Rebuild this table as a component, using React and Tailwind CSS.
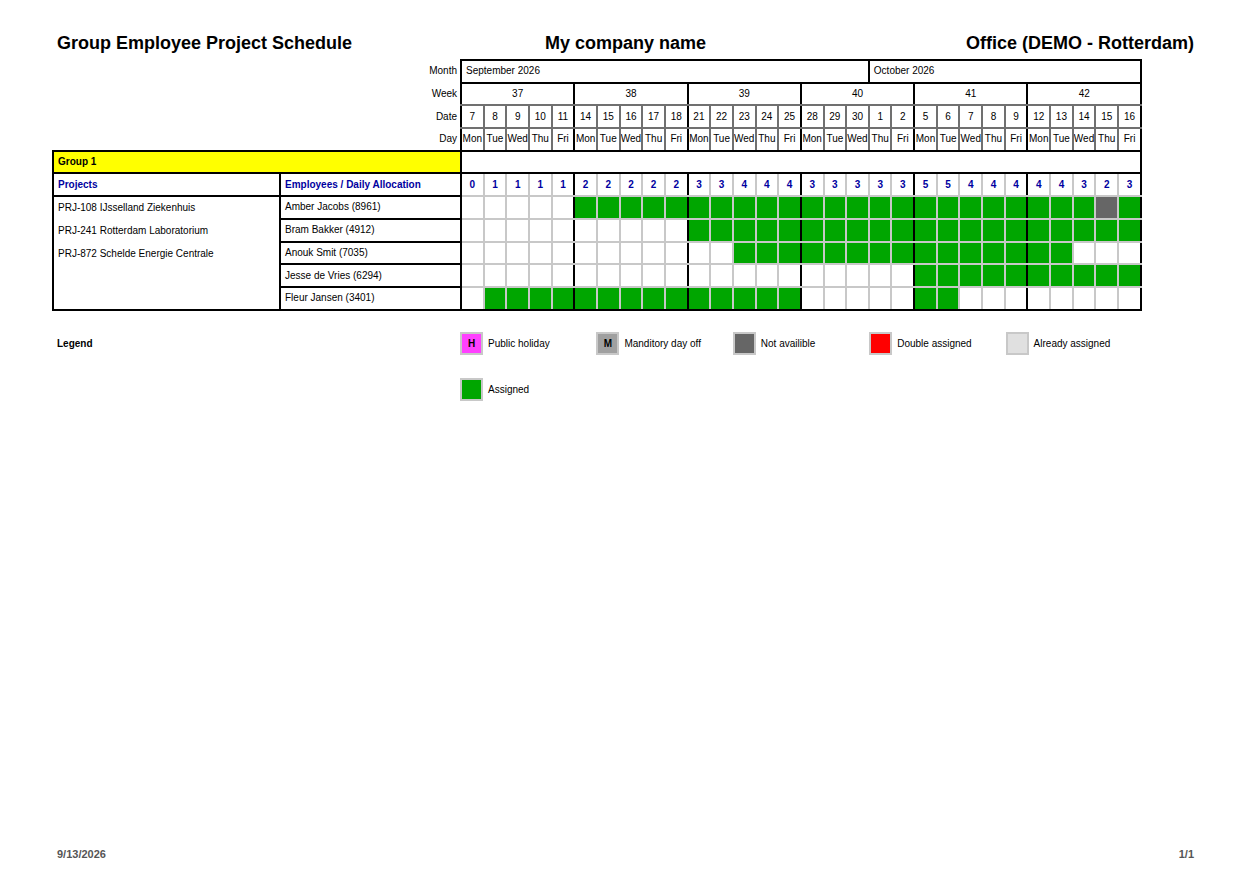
import React from "react";

const weeks = [37, 38, 39, 40, 41, 42];
const dates = [
    7, 8, 9, 10, 11, 14, 15, 16, 17, 18, 21, 22, 23, 24, 25, 28, 29, 30, 1, 2,
    5, 6, 7, 8, 9, 12, 13, 14, 15, 16,
];
const dayNames = ["Mon", "Tue", "Wed", "Thu", "Fri"];
const counts = [
    0, 1, 1, 1, 1, 2, 2, 2, 2, 2, 3, 3, 4, 4, 4, 3, 3, 3, 3, 3, 5, 5, 4, 4, 4,
    4, 4, 3, 2, 3,
];

const projects = [
    "PRJ-108 IJsselland Ziekenhuis",
    "PRJ-241 Rotterdam Laboratorium",
    "PRJ-872 Schelde Energie Centrale",
];

// G = assigned, D = not available, "" = free
const range = (from, to) => {
    const out = [];
    for (let i = from; i <= to; i++) out.push(i);
    return out;
};
const makeRow = (green, dark = []) =>
    Array.from({ length: 30 }, (_, i) =>
        dark.includes(i) ? "D" : green.includes(i) ? "G" : ""
    );

const employees = [
    { name: "Amber Jacobs (8961)", cells: makeRow(range(5, 29), [28]) },
    { name: "Bram Bakker (4912)", cells: makeRow(range(10, 29)) },
    { name: "Anouk Smit (7035)", cells: makeRow(range(12, 26)) },
    { name: "Jesse de Vries (6294)", cells: makeRow(range(20, 29)) },
    { name: "Fleur Jansen (3401)", cells: makeRow([...range(1, 14), 20, 21]) },
];

const sideX = (i, grey) => {
    const l = i % 5 === 0 ? "border-l-black" : grey.l;
    const r = i % 5 === 4 ? "border-r-black" : grey.r;
    return `${l} ${r}`;
};
const headGrey = { l: "border-l-[#707070]", r: "border-r-[#707070]" };
const bodyGrey = { l: "border-l-[#c8c8c8]", r: "border-r-[#c8c8c8]" };

const cellColor = { G: "bg-[#00a600]", D: "bg-[#666666]", "": "bg-white" };

const legend = [
    { label: "Public holiday", box: "bg-[#ff40ff]", mark: "H" },
    { label: "Manditory day off", box: "bg-[#a0a0a0]", mark: "M" },
    { label: "Not availible", box: "bg-[#666666]" },
    { label: "Double assigned", box: "bg-[#ff0000]" },
    { label: "Already assigned", box: "bg-[#e0e0e0]" },
    { label: "Assigned", box: "bg-[#00a600]" },
];

const LabelCell = ({ children }) => (
    <td colSpan={2} className="text-right pr-[3px] p-0">
        {children}
    </td>
);

export default function App() {
    return (
        <div className="h-[893px] w-[1259px] bg-white text-black font-['Liberation_Sans',Arial,sans-serif] flex flex-col">
            <div className="pl-[57px] pt-[33px]">
                <div className="grid grid-cols-3 w-[1137px] text-[18px] font-bold leading-[21px]">
                    <div>Group Employee Project Schedule</div>
                    <div className="text-center">My company name</div>
                    <div className="text-right">Office (DEMO - Rotterdam)</div>
                </div>
            </div>

            <div className="pl-[52px] pt-[5px]">
                <table className="table-fixed border-collapse w-[1090px] text-[10px] leading-none">
                    <colgroup>
                        <col className="w-[227px]" />
                        <col className="w-[181px]" />
                        {dates.map((_, i) => (
                            <col key={i} />
                        ))}
                    </colgroup>
                    <tbody>
                        <tr className="h-[22.7px]">
                            <LabelCell>Month</LabelCell>
                            <td colSpan={18} className="border-2 border-black pl-[4px]">
                                September 2026
                            </td>
                            <td colSpan={12} className="border-2 border-black pl-[4px]">
                                October 2026
                            </td>
                        </tr>
                        <tr className="h-[22.7px]">
                            <LabelCell>Week</LabelCell>
                            {weeks.map((w) => (
                                <td
                                    key={w}
                                    colSpan={5}
                                    className="border-2 border-t-black border-x-black border-b-[#707070] text-center"
                                >
                                    {w}
                                </td>
                            ))}
                        </tr>
                        <tr className="h-[22.7px]">
                            <LabelCell>Date</LabelCell>
                            {dates.map((d, i) => (
                                <td
                                    key={i}
                                    className={`border-2 border-t-[#707070] border-b-[#707070] ${sideX(i, headGrey)} text-center p-0`}
                                >
                                    {d}
                                </td>
                            ))}
                        </tr>
                        <tr className="h-[22.7px]">
                            <LabelCell>Day</LabelCell>
                            {dates.map((_, i) => (
                                <td
                                    key={i}
                                    className={`border-2 border-t-[#707070] border-b-black ${sideX(i, headGrey)} text-center p-0 overflow-hidden whitespace-nowrap`}
                                >
                                    {dayNames[i % 5]}
                                </td>
                            ))}
                        </tr>
                        <tr className="h-[22.7px]">
                            <td colSpan={2} className="border-2 border-black bg-[#ffff00] font-bold pl-[4px]">
                                Group 1
                            </td>
                            <td colSpan={30} className="border-2 border-black"></td>
                        </tr>
                        <tr className="h-[22.7px] font-bold text-[#0000a0]">
                            <td className="border-2 border-black pl-[4px]">Projects</td>
                            <td className="border-2 border-black pl-[4px]">
                                Employees / Daily Allocation
                            </td>
                            {counts.map((c, i) => (
                                <td
                                    key={i}
                                    className={`border-2 border-t-black border-b-[#c8c8c8] ${sideX(i, bodyGrey)} text-center p-0`}
                                >
                                    {c}
                                </td>
                            ))}
                        </tr>
                        {employees.map((emp, r) => (
                            <tr key={emp.name} className="h-[22.7px]">
                                {r === 0 && (
                                    <td
                                        rowSpan={5}
                                        className="border-2 border-black align-top pl-[4px] leading-[22.7px]"
                                    >
                                        {projects.map((p) => (
                                            <div key={p}>{p}</div>
                                        ))}
                                    </td>
                                )}
                                <td className="border-2 border-black pl-[4px]">{emp.name}</td>
                                {emp.cells.map((s, i) => (
                                    <td
                                        key={i}
                                        className={`border-2 border-t-[#c8c8c8] ${
                                            r === 4 ? "border-b-black" : "border-b-[#c8c8c8]"
                                        } ${sideX(i, bodyGrey)} ${cellColor[s]} p-0`}
                                    ></td>
                                ))}
                            </tr>
                        ))}
                    </tbody>
                </table>
            </div>

            <div className="flex pl-[52px] pt-[21px] text-[10px]">
                <div className="w-[408px] pl-[5px] h-[23px] flex items-center font-bold">
                    Legend
                </div>
                <div className="grid grid-cols-5 w-[682px] gap-y-[23px]">
                    {legend.map((l) => (
                        <div key={l.label} className="flex items-center gap-[5px]">
                            <div
                                className={`w-[23px] h-[23px] border-2 border-[#c8c8c8] ${l.box} flex items-center justify-center font-bold`}
                            >
                                {l.mark}
                            </div>
                            <span>{l.label}</span>
                        </div>
                    ))}
                </div>
            </div>

            <div className="mt-auto pl-[57px] pb-[32px] w-[1194px] flex justify-between text-[11px] font-bold text-[#555555] leading-[13px]">
                <span>9/13/2026</span>
                <span>1/1</span>
            </div>
        </div>
    );
}
